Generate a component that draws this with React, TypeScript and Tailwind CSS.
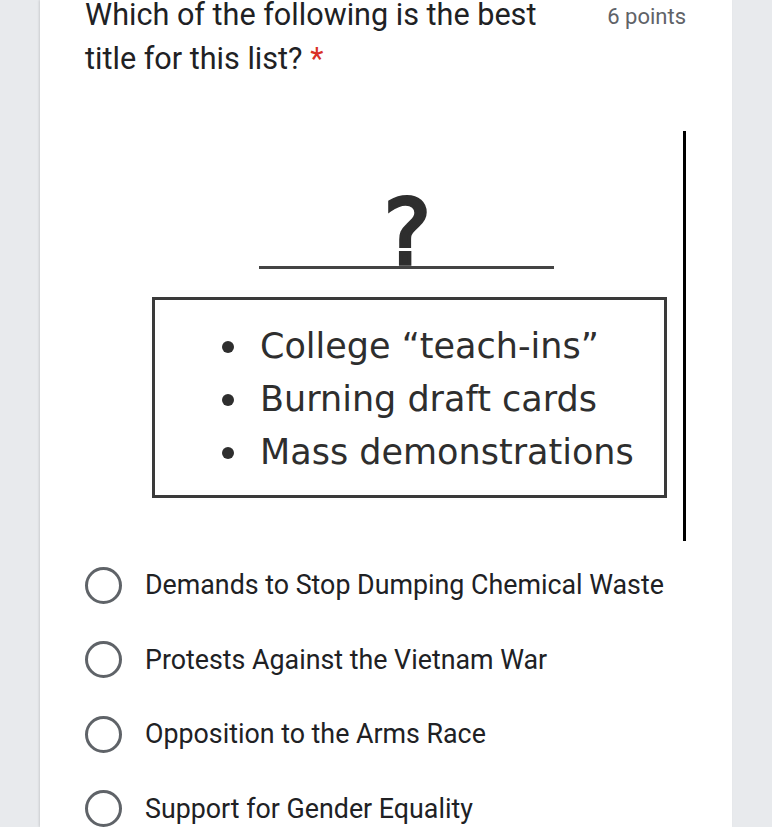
const options = [
    "Demands to Stop Dumping Chemical Waste",
    "Protests Against the Vietnam War",
    "Opposition to the Arms Race",
    "Support for Gender Equality",
];

const bullets = ["College \u201Cteach-ins\u201D", "Burning draft cards", "Mass demonstrations"];

export default function App() {
    return (
        <div className="h-[827px] overflow-hidden bg-[#e8eaed] flex font-['Roboto',sans-serif]">
            <div className="ml-[40px] w-[692px] h-[827px] bg-white pl-[45px] pr-[46px] shadow-[-1px_0_2px_rgba(0,0,0,0.12)]">
                <div className="flex justify-between items-start mt-[-7px]">
                    <h2 className="w-[480px] text-[30.6px] leading-[44px] text-[#202124]">
                        Which of the following is the best title for this list?{" "}
                        <span className="text-[#d93025]">*</span>
                    </h2>
                    <span className="text-[22px] leading-[28px] mt-[10px] text-[#5f6368]">6 points</span>
                </div>

                <QuestionImage />

                <div className="mt-[7px] flex flex-col">
                    {options.map((opt) => (
                        <label key={opt} className="flex items-center h-[74.5px]">
                            <span className="w-[37px] h-[37px] rounded-full border-[3px] border-[#5f6368] shrink-0" />
                            <span className="ml-[23px] text-[26.8px] text-[#202124]">{opt}</span>
                        </label>
                    ))}
                </div>
            </div>
        </div>
    );
}

function QuestionImage() {
    return (
        <figure className="mt-[50px] w-[601px] h-[410px] border-r-[3px] border-black flex flex-col font-['DejaVu_Sans',Verdana,sans-serif] text-[#2e2e2e]">
            <div className="ml-[174px] w-[295px] pt-[57px]">
                <div className="h-[78px] text-center pl-[2px] text-[90px] font-normal leading-none [-webkit-text-stroke:3.5px_#2e2e2e]">?</div>
                <div className="h-[3px] bg-[#444]" />
            </div>
            <div className="ml-[67px] mt-[28px] w-[515px] h-[201px] border-[3px] border-[#3a3a3a]">
                <ul className="pt-[20px] pl-[67px]">
                    {bullets.map((b) => (
                        <li key={b} className="flex items-center h-[53px] text-[35px] leading-[53px]">
                            <span className="w-[12px] h-[12px] rounded-full bg-[#2e2e2e] shrink-0" />
                            <span className="ml-[26px]">{b}</span>
                        </li>
                    ))}
                </ul>
            </div>
        </figure>
    );
}
